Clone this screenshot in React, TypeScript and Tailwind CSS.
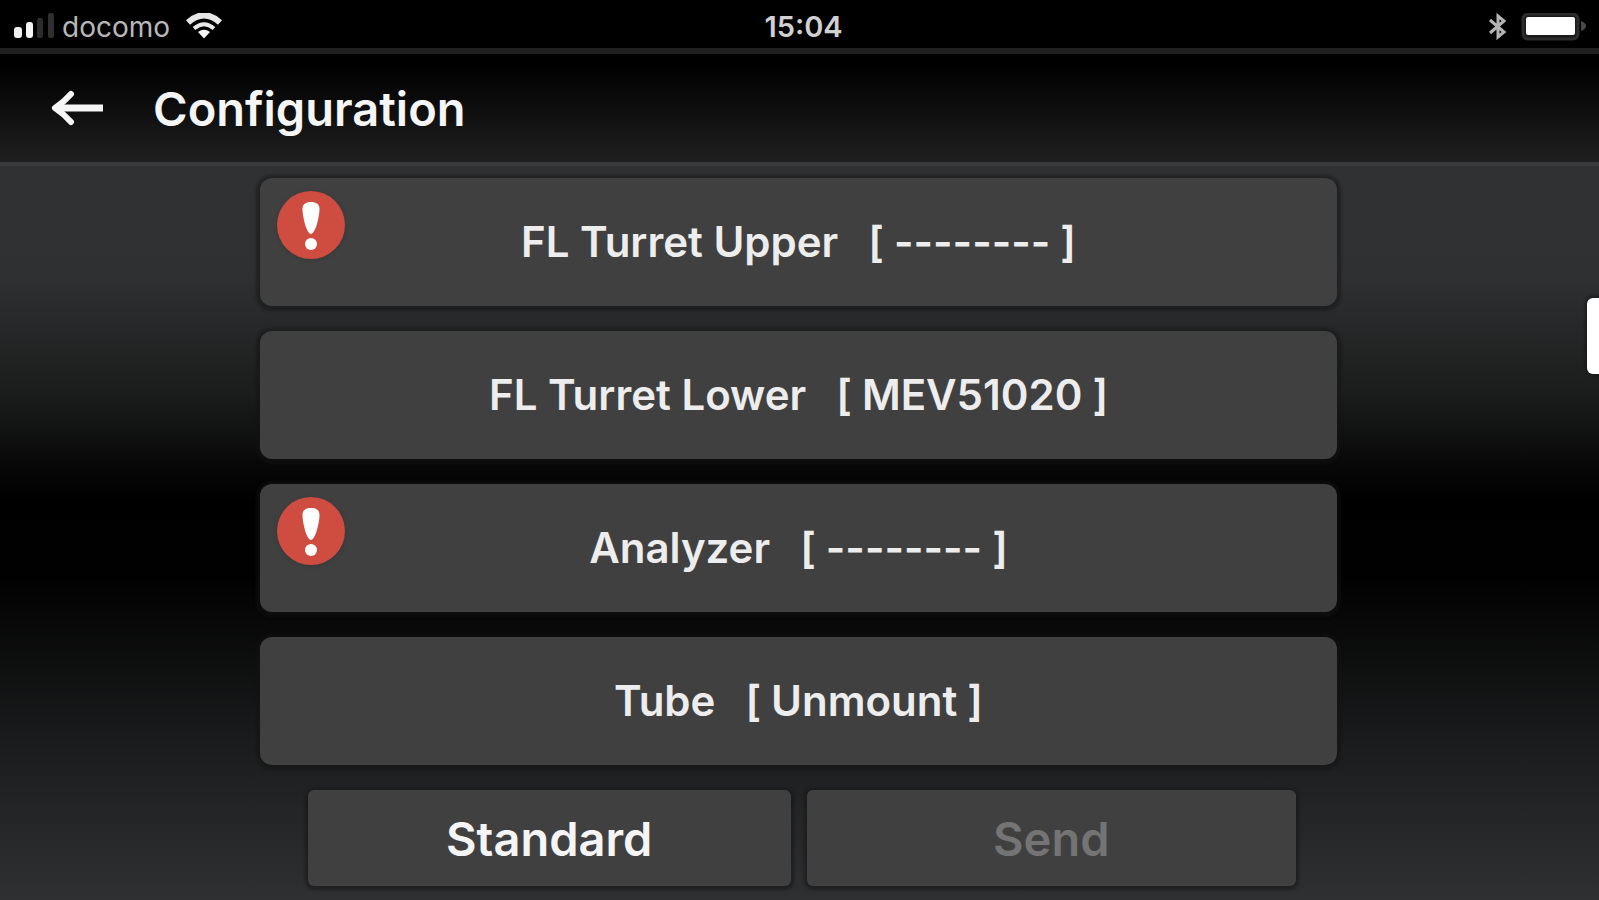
interface Unit {
  id: string;
  name: string;
  value: string;
  warning?: boolean;
}

const units: Unit[] = [
  { id: 'fl-upper', name: 'FL Turret Upper', value: '--------', warning: true },
  { id: 'fl-lower', name: 'FL Turret Lower', value: 'MEV51020' },
  { id: 'analyzer', name: 'Analyzer', value: '--------', warning: true },
  { id: 'tube', name: 'Tube', value: 'Unmount' },
];

function SignalIcon() {
  return (
    <svg className="h-7 w-[44px]" viewBox="0 0 44 28" aria-hidden="true">
      <rect x="2" y="14" width="8" height="11" rx="3" fill="#f0f0f0" />
      <rect x="14" y="9" width="7" height="16" rx="3" fill="#f5f5f5" />
      <rect x="25" y="5" width="6" height="20" rx="2" fill="#2c2c2c" />
      <rect x="36" y="0" width="6" height="25" rx="2" fill="#303030" />
    </svg>
  );
}

function WifiIcon() {
  return (
    <svg className="h-7 w-9" viewBox="0 0 36 28" fill="none" stroke="#e8e8e8" aria-hidden="true">
      <path d="M2 9.500 Q18 -5 34 9.500" strokeWidth="6" />
      <path d="M8 15.500 Q18 7 28 15.500" strokeWidth="4" />
      <path d="M12 19 Q18 14.500 24 19 L18 25.500Z" fill="#f5f5f5" stroke="none" />
    </svg>
  );
}

function BluetoothIcon() {
  return (
    <svg
      className="h-7 w-[18px]"
      viewBox="0 0 18 28"
      fill="none"
      stroke="#b4b4b4"
      strokeWidth="3"
      aria-hidden="true"
    >
      <path d="M1 7 L15 19 L9 24 V3 L15 8 L1 20" />
    </svg>
  );
}

function BatteryIcon() {
  return (
    <svg className="h-7 w-[66px]" viewBox="0 0 66 28" aria-hidden="true">
      <rect x="2" y="1" width="55" height="25" rx="5" fill="#1a1a1a" stroke="#2c2c2c" strokeWidth="3" />
      <rect x="5" y="4" width="49" height="18" rx="2" fill="#ffffff" />
      <path d="M60 8 Q65 10 65 13 Q65 16 60 18Z" fill="#4a4a4a" />
    </svg>
  );
}

function BackIcon() {
  return (
    <svg
      className="h-9 w-[54px]"
      viewBox="0 0 54 36"
      fill="none"
      stroke="#f5f5f5"
      strokeWidth="6"
      strokeLinecap="round"
      strokeLinejoin="round"
      aria-hidden="true"
    >
      <path d="M20 4 Q13 12 4 18 Q13 24 20 32" />
      <path d="M5 18 H52" strokeWidth="7" strokeLinecap="butt" />
    </svg>
  );
}

function WarningIcon() {
  return (
    <svg
      className="absolute left-[16px] top-[12px] size-[70px] drop-shadow-sm"
      viewBox="0 0 70 70"
      role="img"
      aria-label="Warning"
    >
      <circle cx="35" cy="35" r="34" fill="#ce4c40" />
      <path d="M35 12 C40 12 44 14 43.500 20 C43 29 39 44 35 44 C31 44 27 29 26.500 20 C26 14 30 12 35 12Z" fill="#ffffff" />
      <circle cx="35" cy="54" r="6" fill="#ffffff" />
    </svg>
  );
}

function StatusBar() {
  return (
    <div className="grid h-[54px] grid-cols-[1fr_auto_1fr] items-center border-b-[6px] border-[#202020] bg-black pl-3 pr-1 pt-1.5 text-[28px] leading-8 text-[#b8b8b8]">
      <div className="flex items-center">
        <SignalIcon />
        <span className="ml-1.5 mr-4">docomo</span>
        <WifiIcon />
      </div>
      <time className="text-[29px] font-semibold text-[#d0d0d0]">15:04</time>
      <div className="flex items-center justify-end gap-3.5 pr-2">
        <BluetoothIcon />
        <BatteryIcon />
      </div>
    </div>
  );
}

function UnitButton({ unit }: { unit: Unit }) {
  return (
    <button
      type="button"
      className="relative flex h-32 w-full items-center justify-center gap-[30px] rounded-xl bg-[#404040] text-[42px] font-semibold leading-none text-[#ededed] shadow-[0_1px_3px_4px_rgba(20,20,20,0.5)]"
    >
      {unit.warning && <WarningIcon />}
      <span>{unit.name}</span>
      <span className="flex gap-2.5">
        <span>[</span>
        <span>{unit.value}</span>
        <span>]</span>
      </span>
    </button>
  );
}

export default function App() {
  return (
    <div className="flex min-h-screen flex-col bg-black font-['Inter',sans-serif]">
      <StatusBar />
      <header className="flex h-28 items-center gap-[48px] border-b-4 border-[#38393a] bg-[linear-gradient(to_bottom,#000000_10%,#1f1f1f)] pl-[51px]">
        <button type="button" aria-label="Back">
          <BackIcon />
        </button>
        <h1 className="text-[47px] font-semibold leading-none text-[#f5f5f5]">Configuration</h1>
      </header>

      <main className="relative flex-1 bg-[linear-gradient(to_bottom,#303133_0%,#2e3032_15%,#1b1d1c_31%,#070707_41%,#000000_46%,#010101_56%,#1b1c1d_79%,#2f3032_100%)] pb-3.5 pl-[260px] pr-[262px] pt-3">
        <div className="flex flex-col gap-[25px]">
          {units.map((unit) => (
            <UnitButton key={unit.id} unit={unit} />
          ))}
          <div className="grid grid-cols-[483fr_490fr] gap-4 pl-[48px] pr-[41px] text-[47px] font-semibold leading-none">
            <button
              type="button"
              className="h-24 rounded-md bg-[#404040] text-[#f5f5f5] shadow-[0_1px_3px_3px_rgba(20,20,20,0.5)]"
            >
              Standard
            </button>
            <button
              type="button"
              disabled
              className="h-24 rounded-md bg-[#404040] text-[#747474] shadow-[0_1px_3px_3px_rgba(20,20,20,0.5)]"
            >
              Send
            </button>
          </div>
        </div>
        <div className="absolute right-0 top-[132px] h-[76px] w-3 rounded-l-md bg-white shadow-[0_0_3px_2px_rgba(20,20,20,0.6)]" />
      </main>
    </div>
  );
}
